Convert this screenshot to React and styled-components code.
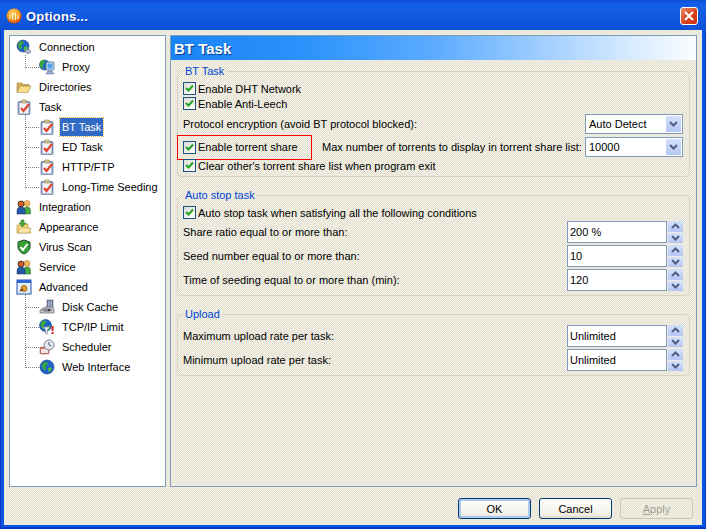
import React from 'react';
import styled, { createGlobalStyle } from 'styled-components';

const dither = 'repeating-conic-gradient(#e2dfce 0 25%, #f5f3ea 0 50%) 0 0 / 2px 2px';

const GlobalStyle = createGlobalStyle`
  html, body { margin: 0; padding: 0; overflow: hidden; }
  body { font-family: "Liberation Sans", Arial, sans-serif; font-size: 11px; color: #000; }
`;

const Window = styled.div`
  width: 706px;
  height: 529px;
  display: flex;
  flex-direction: column;
  background: #0a55e6;
  box-shadow: inset 1px 0 #0a3cc0, inset -1px 0 #0a3cc0, inset 0 -2px #0638c4;
  box-sizing: border-box;
`;

const TitleBar = styled.div`
  height: 30px;
  flex: none;
  display: flex;
  align-items: center;
  padding: 2px 8px 0 6px;
  box-sizing: border-box;
  gap: 4px;
  background:
    repeating-conic-gradient(rgba(0,0,60,.12) 0 25%, rgba(255,255,255,.05) 0 50%) 0 0 / 2px 2px,
    linear-gradient(#0a4fd8 0, #0a5cf0 3px, #0f62f2 6px, #0a58e8 20px, #0650dc 100%);
`;

const Title = styled.div`
  flex: 1;
  color: #fff;
  font-weight: bold;
  font-size: 13px;
  letter-spacing: .2px;
  text-shadow: 1px 1px 0 #0a2fa0;
`;

const CloseButton = styled.div`
  width: 18px;
  height: 18px;
  border: 1px solid #fff;
  border-radius: 3px;
  background: linear-gradient(135deg, #e8906c, #d8421e 55%, #c2300e);
  display: flex;
  align-items: center;
  justify-content: center;
  box-sizing: border-box;
`;

const Body = styled.div`
  flex: 1;
  margin: 0 4px 4px;
  padding: 5px 5px 7px;
  display: flex;
  flex-direction: column;
  background: ${dither};
  min-height: 0;
`;

const Main = styled.div`
  height: 452px;
  flex: none;
  display: flex;
  gap: 4px;
`;

const Tree = styled.div`
  width: 157px;
  flex: none;
  box-sizing: border-box;
  background: #fff;
  border: 1px solid #7f9db9;
  padding: 1px 0 0 6px;
`;

const TreeRow = styled.div`
  height: 20px;
  display: flex;
  align-items: center;
  gap: 5px;
  position: relative;
  padding-left: ${p => (p.$child ? '23px' : '0')};
  ${p => p.$child && `
    &::before {
      content: '';
      position: absolute;
      left: 9px;
      top: ${p.$first ? '-2px' : '-10px'};
      width: 13px;
      height: ${p.$first ? '12px' : '20px'};
      border-left: 1px dotted #808080;
      border-bottom: 1px dotted #808080;
    }
  `}
`;

const TreeLabel = styled.span`
  padding: 2px 2px;
  line-height: 14px;
  ${p => p.$selected && `
    background: #316ac5;
    color: #fff;
    outline: 1px dotted #e8b040;
  `}
`;

const Panel = styled.div`
  flex: 1;
  box-sizing: border-box;
  border: 1px solid #7f9db9;
  padding: 0 6px;
  display: flex;
  flex-direction: column;
  min-width: 0;
`;

const PanelHeader = styled.div`
  height: 24px;
  flex: none;
  margin: 0 -6px;
  padding: 0 3px;
  display: flex;
  align-items: center;
  color: #fff;
  font-size: 15px;
  font-weight: bold;
  text-shadow: 1px 1px 1px #0a3a90;
  background: linear-gradient(90deg, #1a84f6 0, #2a92fb 25%, #5cabff 50%, #a4d0ff 72%, #d8ebff 88%, #fbfdff 100%);
`;

const Group = styled.fieldset`
  margin: 0 0 12px;
  padding: ${p => p.$pad || 3}px 6px 0 5px;
  border: 1px solid #d6d2bf;
  border-radius: 5px;
  min-width: 0;
  height: ${p => p.$height}px;
  box-sizing: border-box;
  &:first-of-type { margin-top: 5px; }
`;

const Legend = styled.legend`
  padding: 0 2px;
  margin-left: 0;
  color: #0046d5;
  font-size: 11px;
  line-height: 13px;
`;

const Stack = styled.div`
  display: flex;
  flex-direction: column;
  gap: ${p => p.$gap || 0}px;
`;

const Row = styled.div`
  display: flex;
  align-items: center;
  min-height: ${p => p.$height || 15}px;
  position: relative;
  margin-top: ${p => p.$top || 0}px;
`;

const CheckLabel = styled.label`
  display: flex;
  align-items: center;
  gap: 2px;
  white-space: nowrap;
  ${p => p.$width && `width: ${p.$width}px; flex: none;`}
`;

const CheckBox = styled.span`
  width: 13px;
  height: 13px;
  flex: none;
  box-sizing: border-box;
  border: 1px solid #1c5180;
  background: linear-gradient(135deg, #dcdcd7, #fff);
  display: flex;
  align-items: center;
  justify-content: center;
`;

const RowText = styled.span`
  flex: 1;
  white-space: nowrap;
`;

// red marker drawn over the screenshot
const Annotation = styled.span`
  display: block;
  position: absolute;
  left: -6px;
  top: -2px;
  width: 135px;
  height: 25px;
  box-sizing: border-box;
  border: 1px solid #ff0000;
  pointer-events: none;
`;

const Select = styled.div`
  width: 98px;
  height: 20px;
  flex: none;
  box-sizing: border-box;
  border: 1px solid #7f9db9;
  background: #fff;
  display: flex;
  align-items: center;
  padding: 0 1px 0 3px;
`;

const FieldValue = styled.span`
  flex: 1;
`;

const ArrowButton = styled.span`
  width: 15px;
  height: 16px;
  flex: none;
  background: linear-gradient(#d6e2fc, #b4c6f4);
  border-radius: 1px;
  display: flex;
  align-items: center;
  justify-content: center;
`;

const Input = styled.div`
  width: 100px;
  height: 22px;
  box-sizing: border-box;
  border: 1px solid #7f9db9;
  background: #fff;
  display: flex;
  align-items: center;
  padding: 0 2px;
`;

const Spin = styled.div`
  width: 15px;
  height: 22px;
  margin-left: 1px;
  flex: none;
  display: flex;
  flex-direction: column;
  gap: 1px;
`;

const SpinPart = styled.span`
  flex: 1;
  background: linear-gradient(#d6e2fc, #b4c6f4);
  border-radius: 1px;
  display: flex;
  align-items: center;
  justify-content: center;
`;

const Footer = styled.div`
  display: flex;
  justify-content: flex-end;
  gap: 8px;
  padding: 11px 0 0;
  margin-right: 4px;
`;

const Button = styled.div`
  width: 73px;
  height: 21px;
  box-sizing: border-box;
  border-radius: 3px;
  border: 1px solid ${p => (p.$disabled ? '#c9c7ba' : '#003c74')};
  color: ${p => (p.$disabled ? '#a19f94' : '#000')};
  background: ${p => (p.$disabled ? 'transparent' : 'linear-gradient(#ffffff, #f2f0e6 80%, #dcd8c8)')};
  ${p => p.$primary && 'box-shadow: inset 0 0 0 2px #b0c8ee;'}
  display: flex;
  align-items: center;
  justify-content: center;
  u { text-decoration: underline; }
`;

// small 16x16 tree icons
const Svg = ({ children, size = 16 }) => (
  <svg width={size} height={size} viewBox="0 0 16 16" style={{ flex: 'none' }}>{children}</svg>
);

const Globe = ({ cx = 7, cy = 7, r = 6 }) => (
  <g>
    <circle cx={cx} cy={cy} r={r} fill="#1f62c8" stroke="#123f8c" strokeWidth=".6" />
    <path d={`M${cx - 4} ${cy - 4}l3 -1 2 1 -1 2 -2 1 1 2 -1 3 -2 -2 -1 -3z`} fill="#3da83a" />
    <path d={`M${cx + 1} ${cy + 1}l3 -1 1 2 -2 3 -2 -1z`} fill="#4dbb46" />
  </g>
);

const icons = {
  connection: (
    <Svg>
      <Globe />
      <path d="M9 11l4 -1 2 3 -3 2 -3 -2z" fill="#aeb8c8" stroke="#5d6a80" strokeWidth=".6" />
    </Svg>
  ),
  proxy: (
    <Svg>
      <Globe cx={5.5} cy={6} r={5} />
      <rect x="7" y="3" width="8" height="8" rx="1" fill="#cfe4fb" stroke="#44618c" strokeWidth=".8" />
      <rect x="8.5" y="4.5" width="5" height="5" fill="#4aa0ea" />
      <path d="M7 15l2 -3h4l2 3z" fill="#9cb4d0" stroke="#44618c" strokeWidth=".5" />
    </Svg>
  ),
  folder: (
    <Svg>
      <path d="M1 13V4h5l1.5 1.5H13V7H4L1 13z" fill="#d8b050" stroke="#98803c" strokeWidth=".6" />
      <path d="M1 13.5L4 7h11l-3 6.5z" fill="#f8dc88" stroke="#a88c44" strokeWidth=".6" />
    </Svg>
  ),
  task: (
    <Svg>
      <rect x="2" y="2.5" width="12" height="13" rx="1" fill="#8c9cc4" stroke="#5c6c94" strokeWidth=".6" />
      <rect x="3.5" y="4" width="9" height="10.5" fill="#f4f4fa" />
      <rect x="5.5" y="1" width="5" height="3" rx="1" fill="#d8c890" stroke="#807850" strokeWidth=".6" />
      <path d="M5 9l2.500 3L13 5" fill="none" stroke="#e0442c" strokeWidth="2.200" />
    </Svg>
  ),
  people: (
    <Svg>
      <circle cx="11" cy="4.5" r="3" fill="#f4b858" stroke="#a06c18" strokeWidth=".5" />
      <path d="M7.5 15v-4a3.5 3 0 0 1 7 0v4z" fill="#48a848" stroke="#286828" strokeWidth=".5" />
      <circle cx="5" cy="5" r="3" fill="#d8602c" stroke="#222" strokeWidth=".8" />
      <path d="M1 15v-3.500a4 3.500 0 0 1 8 0V15z" fill="#2458a8" stroke="#162c58" strokeWidth=".5" />
    </Svg>
  ),
  appearance: (
    <Svg>
      <path d="M1 14V6h4l1 -1h6v3l3 6z" fill="#f4d47c" stroke="#a88c44" strokeWidth=".6" />
      <path d="M2 14l2 -5h11l-2 5z" fill="#fbe8a8" stroke="#a88c44" strokeWidth=".5" />
      <path d="M8 1v3h2L6.500 8 3 4h2V1z" fill="#48a838" stroke="#286818" strokeWidth=".5" />
    </Svg>
  ),
  shield: (
    <Svg>
      <path d="M8 1l6 2v5c0 3 -3 6 -6 7 -3 -1 -6 -4 -6 -7V3z" fill="#34a034" stroke="#264c30" strokeWidth="1" />
      <path d="M4.500 8l2.500 3 4.500 -6" fill="none" stroke="#fff" strokeWidth="2" />
    </Svg>
  ),
  advanced: (
    <Svg>
      <rect x="1" y="1" width="14" height="14" fill="#e8f0fc" stroke="#2050a8" />
      <rect x="1" y="1" width="14" height="3" fill="#2868d0" />
      <circle cx="8" cy="9.500" r="3" fill="#e8a030" stroke="#885810" strokeWidth=".8" />
      <path d="M4 12l3 -2" stroke="#483018" strokeWidth="1.500" />
    </Svg>
  ),
  disk: (
    <Svg>
      <rect x="8" y="1" width="6" height="8" fill="#7884a8" stroke="#3c4464" strokeWidth=".5" />
      <path d="M9.500 2v6M11 2v6M12.500 2v6" stroke="#c8d0e4" strokeWidth=".6" />
      <path d="M1 11l5 -3h8l1 3v3H1z" fill="#c8c8cc" stroke="#585860" strokeWidth=".6" />
      <ellipse cx="8" cy="11" rx="5" ry="1.800" fill="#88888f" />
      <circle cx="10" cy="11" r="1" fill="#222" />
    </Svg>
  ),
  tcp: (
    <Svg>
      <Globe cx={6.500} cy={6.500} r={6} />
      <path d="M4 8h7l-2.500 3v4h-2v-4z" fill="#dde2ea" stroke="#6c7488" strokeWidth=".5" />
      <path d="M13.500 7v5" stroke="#d82020" strokeWidth="2" />
      <rect x="12.500" y="13" width="2" height="2" fill="#d82020" />
    </Svg>
  ),
  scheduler: (
    <Svg>
      <rect x="1" y="8" width="9" height="7" rx="1" fill="#d87868" stroke="#885048" strokeWidth=".5" />
      <rect x="2" y="10" width="7" height="4" fill="#f0e8e0" />
      <circle cx="10" cy="6" r="5" fill="#e4e8f0" stroke="#7c8498" />
      <path d="M10 3v3l2 1" fill="none" stroke="#4c5468" />
    </Svg>
  ),
  web: (
    <Svg>
      <Globe cx={8} cy={8} r={7} />
    </Svg>
  ),
};

const treeItems = [
  { label: 'Connection', icon: 'connection' },
  { label: 'Proxy', icon: 'proxy', child: true, first: true },
  { label: 'Directories', icon: 'folder' },
  { label: 'Task', icon: 'task' },
  { label: 'BT Task', icon: 'task', child: true, first: true, selected: true },
  { label: 'ED Task', icon: 'task', child: true },
  { label: 'HTTP/FTP', icon: 'task', child: true },
  { label: 'Long-Time Seeding', icon: 'task', child: true },
  { label: 'Integration', icon: 'people' },
  { label: 'Appearance', icon: 'appearance' },
  { label: 'Virus Scan', icon: 'shield' },
  { label: 'Service', icon: 'people' },
  { label: 'Advanced', icon: 'advanced' },
  { label: 'Disk Cache', icon: 'disk', child: true, first: true },
  { label: 'TCP/IP Limit', icon: 'tcp', child: true },
  { label: 'Scheduler', icon: 'scheduler', child: true },
  { label: 'Web Interface', icon: 'web', child: true },
];

const Check = ({ children, width }) => (
  <CheckLabel $width={width}>
    <CheckBox>
      <svg width="9" height="9" viewBox="0 0 9 9">
        <path d="M1 4l2.500 2.500L8 1.500" fill="none" stroke="#21a121" strokeWidth="2" />
      </svg>
    </CheckBox>
    {children}
  </CheckLabel>
);

const Chevron = ({ up }) => (
  <svg width="9" height="6" viewBox="0 0 9 6">
    <path d={up ? 'M1 5l3.500 -3.500L8 5' : 'M1 1l3.500 3.500L8 1'} fill="none" stroke="#4d6185" strokeWidth="2" />
  </svg>
);

const Combo = ({ value }) => (
  <Select>
    <FieldValue>{value}</FieldValue>
    <ArrowButton><Chevron /></ArrowButton>
  </Select>
);

const SpinRow = ({ label, value }) => (
  <Row $height={22}>
    <RowText>{label}</RowText>
    <Input>{value}</Input>
    <Spin>
      <SpinPart><Chevron up /></SpinPart>
      <SpinPart><Chevron /></SpinPart>
    </Spin>
  </Row>
);

const App = () => (
  <>
    <GlobalStyle />
    <Window>
      <TitleBar>
        <svg width="16" height="16" viewBox="0 0 16 16">
          <defs>
            <radialGradient id="ball" cx=".45" cy=".35" r=".7">
              <stop offset="0" stopColor="#ffe080" />
              <stop offset=".55" stopColor="#f89818" />
              <stop offset="1" stopColor="#d03808" />
            </radialGradient>
          </defs>
          <circle cx="8" cy="8" r="7.500" fill="url(#ball)" />
          <path d="M4 11V7M6.500 12V5M9.500 12V5M12 11V7" stroke="#fff6d8" strokeWidth="1" />
        </svg>
        <Title>Options...</Title>
        <CloseButton>
          <svg width="10" height="10" viewBox="0 0 10 10">
            <path d="M1 1l8 8M9 1l-8 8" stroke="#fff" strokeWidth="2" />
          </svg>
        </CloseButton>
      </TitleBar>
      <Body>
        <Main>
          <Tree>
            {treeItems.map(item => (
              <TreeRow key={item.label} $child={item.child} $first={item.first}>
                {icons[item.icon]}
                <TreeLabel $selected={item.selected}>{item.label}</TreeLabel>
              </TreeRow>
            ))}
          </Tree>
          <Panel>
            <PanelHeader>BT Task</PanelHeader>
            <Group $height={112}>
              <Legend>BT Task</Legend>
              <Stack>
                <Row><Check>Enable DHT Network</Check></Row>
                <Row><Check>Enable Anti-Leech</Check></Row>
                <Row $height={20} $top={3}>
                  <RowText>Protocol encryption (avoid BT protocol blocked):</RowText>
                  <Combo value="Auto Detect" />
                </Row>
                <Row $height={20} $top={3}>
                  <Annotation />
                  <Check width={139}>Enable torrent share</Check>
                  <RowText>Max number of torrents to display in torrent share list:</RowText>
                  <Combo value="10000" />
                </Row>
                <Row $top={1}><Check>Clear other's torrent share list when program exit</Check></Row>
              </Stack>
            </Group>
            <Group $height={107}>
              <Legend>Auto stop task</Legend>
              <Stack $gap={2}>
                <Row $height={13} $top={1}><Check>Auto stop task when satisfying all the following conditions</Check></Row>
                <SpinRow label="Share ratio equal to or more than:" value="200 %" />
                <SpinRow label="Seed number equal to or more than:" value="10" />
                <SpinRow label="Time of seeding equal to or more than (min):" value="120" />
              </Stack>
            </Group>
            <Group $height={68} $pad={4}>
              <Legend>Upload</Legend>
              <Stack $gap={2}>
                <SpinRow label="Maximum upload rate per task:" value="Unlimited" />
                <SpinRow label="Minimum upload rate per task:" value="Unlimited" />
              </Stack>
            </Group>
          </Panel>
        </Main>
        <Footer>
          <Button $primary>OK</Button>
          <Button>Cancel</Button>
          <Button $disabled><span><u>A</u>pply</span></Button>
        </Footer>
      </Body>
    </Window>
  </>
);

export default App;
